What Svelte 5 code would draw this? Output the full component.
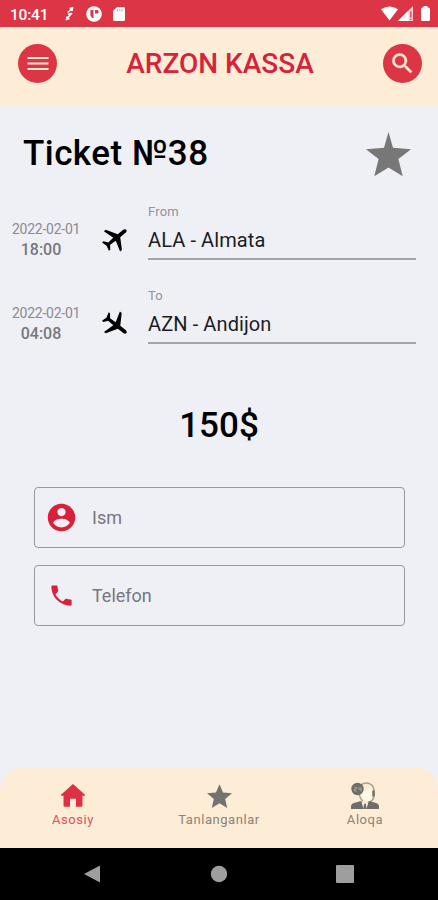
<script lang="ts">
	interface Flight {
		date: string;
		time: string;
		label: string;
		place: string;
		direction: 'depart' | 'arrive';
	}

	const flights: Flight[] = [
		{ date: '2022-02-01', time: '18:00', label: 'From', place: 'ALA - Almata', direction: 'depart' },
		{ date: '2022-02-01', time: '04:08', label: 'To', place: 'AZN - Andijon', direction: 'arrive' }
	];

	const tabs = [
		{ id: 'home', label: 'Asosiy' },
		{ id: 'favorites', label: 'Tanlanganlar' },
		{ id: 'contact', label: 'Aloqa' }
	];

	let activeTab = $state('home');
	let name = $state('');
	let phone = $state('');
</script>

<div class="screen">
	<div class="status-bar">
		<span class="clock">10:41</span>
		<svg class="sync" width="9" height="14" viewBox="0 0 9 14" fill="none" stroke="currentColor" stroke-width="1.5">
			<path d="M2.500 5.500L7 2M4.500 1.500l3-.5-.5 3M7 6L2 11.500M4.500 11.500L1.500 12.500l.5-3M3 7.500l3-1" />
		</svg>
		<svg class="app-dot" width="16" height="16" viewBox="0 0 16 16">
			<circle cx="8" cy="8" r="7.800" fill="currentColor" />
			<path d="M4.500 4h3v8.500C5.500 11.500 4.300 10 4.300 8zM9 4h2.500c1.500 0 1.500 3.500 0 3.500H9z" fill="#dc3545" />
		</svg>
		<svg class="sd-card" width="12" height="14" viewBox="0 0 12 14">
			<path d="M4 0h6.500Q12 0 12 1.500v11q0 1.500-1.500 1.500h-9Q0 14 0 12.500V4z" fill="currentColor" />
			<path d="M4.500 2v2.500M6.800 2v2.500M9.100 2v2.500" stroke="#dc3545" stroke-width=".5" />
		</svg>
		<svg class="signals" width="50" height="16" viewBox="0 0 50 16" fill="currentColor">
			<path d="M0 3.300Q8.500-2.200 17 3.300L8.500 14.500z" />
			<path d="M32 0v15H17z" opacity=".75" />
			<path d="M27.500 4.500V15H17z" />
			<path d="M29.200 5.500h1.300v6h-1.300zM29.200 12.700h1.300V14h-1.300z" fill="#dc3545" />
			<path d="M42.500 0h4v1.500h1q1.500 0 1.500 1.500v10.500q0 1.500-1.500 1.500h-6q-1.500 0-1.500-1.500V3q0-1.500 1.500-1.500h1z" />
		</svg>
	</div>

	<header class="header">
		<button class="round-button" aria-label="Menu">
			<svg width="22" height="16" viewBox="0 0 22 16" stroke="currentColor" stroke-width="2">
				<path d="M.5 2h21M.5 7.500h21M.5 13h21" />
			</svg>
		</button>
		<h1>ARZON KASSA</h1>
		<button class="round-button" aria-label="Search">
			<svg width="27" height="27" viewBox="0 0 24 24" fill="currentColor" stroke="currentColor" stroke-width=".4">
				<path d="M15.500 14h-.79l-.28-.27A6.471 6.471 0 0 0 16 9.500 6.500 6.500 0 1 0 9.500 16c1.610 0 3.090-.59 4.230-1.570l.27.28v.79l5 4.990L20.490 19l-4.990-5zm-6 0C7.010 14 5 11.990 5 9.500S7.010 5 9.500 5 14 7.010 14 9.500 11.990 14 9.500 14z" />
			</svg>
		</button>
	</header>

	<main class="content">
		<div class="title-row">
			<h2>Ticket №38</h2>
			<button class="favorite" aria-label="Favorite">
				<svg width="45" height="45" viewBox="0 0 45 45" fill="currentColor">
					<path d="M22.500 0l4.500 15.700L45 17.300 32.400 27l4.300 17.300-14.200-8.800-14.200 8.800L12.600 27 0 17.300l18-1.600z" />
				</svg>
			</button>
		</div>

		{#each flights as flight}
			<section class="flight">
				<div class="when">
					<span class="date">{flight.date}</span>
					<span class="time">{flight.time}</span>
				</div>
				<svg class="plane {flight.direction}" width="31" height="31" viewBox="0 0 24 24">
					<path d="M22 15.500v-1.800L13.500 8.500V3.200c0-.9-.7-2-1.500-2s-1.500 1.100-1.500 2v5.300L2 13.700v1.800l8.500-2.500.3 5.300-3 2.300V22l4.200-1.200 4.200 1.200v-1.400l-3-2.300.3-5.300z" />
				</svg>
				<div class="place">
					<span class="label">{flight.label}</span>
					<span class="value">{flight.place}</span>
				</div>
			</section>
		{/each}

		<p class="price">150$</p>

		<form class="form">
			<label class="field">
				<svg width="33" height="33" viewBox="0 0 24 24" fill="currentColor">
					<path d="M12 2C6.480 2 2 6.480 2 12s4.480 10 10 10 10-4.480 10-10S17.520 2 12 2zm0 3c1.660 0 3 1.340 3 3s-1.340 3-3 3-3-1.340-3-3 1.340-3 3-3zm0 14.200c-2.500 0-4.710-1.280-6-3.220.03-1.990 4-3.080 6-3.080 1.990 0 5.970 1.090 6 3.080-1.290 1.940-3.500 3.220-6 3.220z" />
				</svg>
				<input type="text" placeholder="Ism" bind:value={name} />
			</label>
			<label class="field">
				<svg width="27" height="27" viewBox="0 0 24 24" fill="currentColor">
					<path d="M6.620 10.790c1.440 2.830 3.760 5.140 6.590 6.590l2.200-2.200c.27-.27.67-.36 1.020-.24 1.120.37 2.330.57 3.570.57.55 0 1 .45 1 1V20c0 .55-.45 1-1 1-9.390 0-17-7.610-17-17 0-.55.45-1 1-1h3.500c.55 0 1 .45 1 1 0 1.250.2 2.450.57 3.570.11.35.03.74-.25 1.020l-2.200 2.200z" />
				</svg>
				<input type="tel" placeholder="Telefon" bind:value={phone} />
			</label>
		</form>
	</main>

	<nav class="tab-bar">
		{#each tabs as tab}
			<button class="tab" class:active={activeTab === tab.id} onclick={() => (activeTab = tab.id)}>
				<span class="tab-icon">
					{#if tab.id === 'home'}
						<svg width="24" height="23" viewBox="0 0 24 23" fill="currentColor">
							<path d="M12 0L0 10.800q-.3 1 .7 1H2.500V21.500q0 1.200 1.200 1.200H9v-8h6v8h5.300q1.200 0 1.200-1.200V11.800h1.800q1 0 .7-1z" />
						</svg>
					{:else if tab.id === 'favorites'}
						<svg width="25" height="24" viewBox="0 0 20 19" fill="currentColor">
							<path d="M10 15.270L16.180 19l-1.640-7.030L20 7.240l-7.190-.61L10 0 7.190 6.630 0 7.240l5.460 4.730L3.820 19z" />
						</svg>
					{:else}
						<svg width="28" height="28" viewBox="0 0 28 28">
							<path d="M9 4C13-.5 22 0 23 8v5q0 5-4 7M8 11q1 6 4 8" fill="none" stroke="#aaa18f" stroke-width="1.500" />
							<path d="M10 10Q18 9 18 5q4 3 3 8c-1 8-9 8-11 0z" fill="#fff7e8" />
							<circle cx="6.500" cy="7" r="6.200" fill="#6f6d69" />
							<path d="M3.500 5.500h2v1.500h-2v2h2.300M8 5v2.500h2.500M10 5v4.500" fill="none" stroke="#a9a297" />
							<path d="M21.300 8.500h2.400v6h-2.400z" fill="#6f6d69" />
							<path d="M0 27v-2.500q0-2.500 3-3.500l7-2 4 3 4-3 7 2q3 1 3 3.500V27z" fill="#6f6d69" />
							<path d="M10.500 19.500L14 22l3.500-2.500L15.500 27h-3z" fill="#fff7e8" />
							<path d="M13 22h2l.7 5h-3.400z" fill="#6f6d69" />
						</svg>
					{/if}
				</span>
				<span class="tab-label">{tab.label}</span>
			</button>
		{/each}
	</nav>

	<div class="system-bar">
		<svg width="18" height="20" viewBox="0 0 18 20"><path d="M17 1.500v17L1 10z" /></svg>
		<svg width="18" height="20" viewBox="0 0 18 20"><circle cx="9" cy="10" r="8.200" /></svg>
		<svg width="18" height="20" viewBox="0 0 18 20"><rect y="1" width="18" height="18" rx="1" /></svg>
	</div>
</div>

<style>
	:global(body) {
		margin: 0;
	}

	.screen {
		display: flex;
		flex-direction: column;
		width: 438px;
		height: 900px;
		overflow: hidden;
		background: #eff0f6;
		font-family: Roboto, sans-serif;
	}

	button {
		padding: 0;
		border: 0;
		background: none;
		font: inherit;
	}

	svg {
		display: block;
		flex-shrink: 0;
	}

	/* Status bar */
	.status-bar {
		display: flex;
		align-items: center;
		box-sizing: border-box;
		height: 27px;
		padding: 1px 7px 0 10px;
		background: #dc3545;
		color: #fff;
	}

	.clock {
		width: 55px;
		padding-top: 1px;
		font-size: 15.5px;
		font-weight: 500;
		letter-spacing: -0.2px;
	}

	.app-dot {
		margin-left: 12px;
	}

	.sd-card {
		margin-left: 11px;
	}

	.signals {
		margin-left: auto;
	}

	/* Header */
	.header {
		display: flex;
		align-items: center;
		justify-content: space-between;
		box-sizing: border-box;
		height: 79px;
		padding: 0 16px 6px 18px;
		background: #fdecd6;
	}

	.round-button {
		display: flex;
		align-items: center;
		justify-content: center;
		width: 39px;
		height: 39px;
		border-radius: 50%;
		background: #dc3545;
		color: #fdecd6;
	}

	h1 {
		margin: 0;
		color: #d6223a;
		font-size: 28px;
		font-weight: 500;
		line-height: 34px;
	}

	/* Content */
	.content {
		flex: 1;
	}

	.title-row {
		display: flex;
		align-items: center;
		justify-content: space-between;
		height: 96px;
		padding: 0 27px 0 23px;
	}

	h2 {
		margin: 0 0 1px;
		color: #000;
		font-size: 35px;
		font-weight: 500;
		letter-spacing: 0.45px;
	}

	.favorite {
		color: #777;
	}

	.flight {
		display: flex;
		height: 84px;
		padding-left: 12px;
	}

	.when {
		display: flex;
		flex-direction: column;
		width: 88px;
		padding-top: 17px;
		color: #8b8b90;
	}

	.date {
		font-size: 14px;
		letter-spacing: -0.25px;
		line-height: 20px;
	}

	.time {
		width: 58px;
		color: #77777b;
		font-size: 16px;
		font-weight: 500;
		line-height: 22px;
		text-align: center;
	}

	.plane {
		margin-top: 21px;
	}

	.depart {
		transform: rotate(51deg);
	}

	.arrive {
		margin-top: 23px;
		transform: rotate(128deg);
	}

	.place {
		display: flex;
		flex-direction: column;
		box-sizing: border-box;
		width: 268px;
		height: 58px;
		margin-left: 17px;
		border-bottom: 2px solid #a3a4aa;
	}

	.label {
		color: #929297;
		font-size: 13px;
		line-height: 20px;
		letter-spacing: 0.2px;
	}

	.value {
		color: #1c1c1e;
		font-size: 20px;
		line-height: 36px;
		letter-spacing: 0.1px;
	}

	.price {
		margin: 36px 0 0;
		font-size: 35px;
		font-weight: 500;
		line-height: 40px;
		text-align: center;
	}

	.form {
		display: flex;
		flex-direction: column;
		gap: 17px;
		padding: 41px 33px 0 34px;
	}

	.field {
		display: grid;
		grid-template-columns: 52px 1fr;
		align-items: center;
		justify-items: center;
		box-sizing: border-box;
		height: 61px;
		border: 1px solid #98999e;
		border-radius: 4px;
		color: #d9203a;
	}

	input {
		box-sizing: border-box;
		width: 100%;
		padding: 0 5px;
		border: 0;
		outline: 0;
		background: none;
		font-family: inherit;
		font-size: 18px;
	}

	input::placeholder {
		color: #77777c;
	}

	/* Bottom tabs */
	.tab-bar {
		display: grid;
		grid-template-columns: repeat(3, 1fr);
		height: 81px;
		border-radius: 24px 24px 0 0;
		background: #fdecd6;
	}

	.tab {
		display: flex;
		flex-direction: column;
		align-items: center;
		padding-top: 14px;
		color: #75736f;
	}

	.tab-icon {
		display: flex;
		align-items: center;
		height: 29px;
	}

	.tab-label {
		color: #8d8378;
		font-size: 13px;
		line-height: 20px;
		letter-spacing: 0.55px;
	}

	.active {
		color: #dc3045;
	}

	.active .tab-label {
		color: #d95360;
	}

	/* Android navigation */
	.system-bar {
		display: flex;
		align-items: center;
		justify-content: space-between;
		box-sizing: border-box;
		height: 52px;
		padding: 0 84px 0 83px;
		background: #000;
		fill: #9e9e9e;
	}
</style>
